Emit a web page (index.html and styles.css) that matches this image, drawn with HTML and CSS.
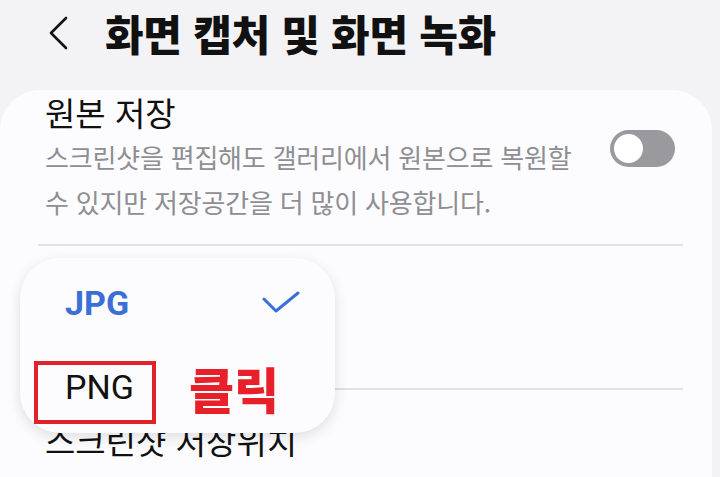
FILE: index.html
```html
<!DOCTYPE html>
<html lang="ko">

<head>
  <meta charset="UTF-8">
  <meta name="viewport" content="width=device-width, initial-scale=1.0">
  <title>화면 캡처 및 화면 녹화</title>
  <link rel="stylesheet" href="styles.css">
</head>

<body>
  <div id="header">
    <svg class="back" width="22" height="34" viewBox="0 0 22 34">
      <path d="M19 2 L4 17 L19 32" fill="none" stroke="#111" stroke-width="2.6" stroke-linecap="round" stroke-linejoin="round" />
    </svg>
    <h1>화면 캡처 및 화면 녹화</h1>
  </div>

  <div id="card">
    <div class="row">
      <div class="text">
        <div class="title">원본 저장</div>
        <div class="desc">스크린샷을 편집해도 갤러리에서 원본으로 복원할<br>수 있지만 저장공간을 더 많이 사용합니다.</div>
      </div>
      <div class="toggle"><span class="knob"></span></div>
    </div>
    <div class="divider"></div>
    <div class="row format"></div>
    <div class="divider"></div>
    <div class="row">
      <div class="title">스크린샷 저장위치</div>
    </div>
  </div>

  <div id="popup">
    <div class="option selected">
      <span>JPG</span>
      <svg width="38" height="24" viewBox="0 0 38 24">
        <path d="M2 8 L14 20 L36 2" fill="none" stroke="#3b6fd6" stroke-width="3" stroke-linecap="round" stroke-linejoin="round" />
      </svg>
    </div>
    <div class="option">
      <span>PNG</span>
    </div>
  </div>

  <div class="mark"></div>
  <div class="click">클릭</div>
</body>

</html>
```

FILE: styles.css
```css
body {
  font-family: 'Noto Sans CJK KR', Roboto, sans-serif;
  margin: 0;
  padding: 0;
  width: 720px;
  height: 477px;
  overflow: hidden;
  background-color: #f3f3f6;
  color: #111;
}

#header {
  display: flex;
  align-items: center;
  height: 90px;
  padding-left: 47px;
  box-sizing: border-box;
  padding-bottom: 24px;
}

#header .back {
  margin-right: 36px;
}

h1 {
  margin: 0;
  font-size: 42px;
  font-weight: 900;
  letter-spacing: -0.3px;
  line-height: 50px;
}

#card {
  margin-right: 8px;
  background-color: #fcfcfe;
  border-radius: 40px 40px 0 0;
  padding: 0 29px 0 38px;
  height: 400px;
}

.row {
  display: flex;
  align-items: center;
  padding-left: 7px;
}

.row:first-child {
  padding-top: 0;
  padding-bottom: 20px;
}

.text {
  flex: 1;
}

.title {
  font-size: 33px;
  line-height: 44px;
}

.desc {
  font-size: 26px;
  line-height: 45px;
  color: #8e8e93;
  white-space: nowrap;
  letter-spacing: -0.2px;
}

.toggle {
  width: 65px;
  height: 37px;
  border-radius: 19px;
  background-color: #9a9a9e;
  margin-right: 8px;
  margin-top: -18px;
  display: flex;
  align-items: center;
  padding: 0 2px;
  box-sizing: border-box;
}

.knob {
  width: 29px;
  height: 29px;
  border-radius: 50%;
  background-color: #fff;
  border: 2px solid #9a9a9e;
}

.divider {
  height: 2px;
  background-color: #e1e1e4;
}

.row.format {
  height: 142px;
}

.row:last-child {
  padding-top: 28px;
}

#popup {
  position: absolute;
  left: 20px;
  top: 258px;
  width: 315px;
  height: 175px;
  background-color: #fcfcfe;
  border-radius: 40px;
  box-shadow: 0 4px 14px rgba(0, 0, 0, 0.12);
  box-sizing: border-box;
  padding: 20px 35px 0 45px;
}

.option {
  display: flex;
  align-items: center;
  justify-content: space-between;
  height: 50px;
  font-family: Roboto, sans-serif;
  font-size: 34px;
}

.option.selected {
  color: #3b6fd6;
  font-weight: 700;
  margin-bottom: 34px;
}

.mark {
  position: absolute;
  left: 34px;
  top: 361px;
  width: 114px;
  height: 55px;
  border: 4px solid #e0222b;
}

.click {
  position: absolute;
  left: 189px;
  top: 356px;
  font-size: 49px;
  font-weight: 900;
  color: #e8202a;
  line-height: 64px;
}
```
